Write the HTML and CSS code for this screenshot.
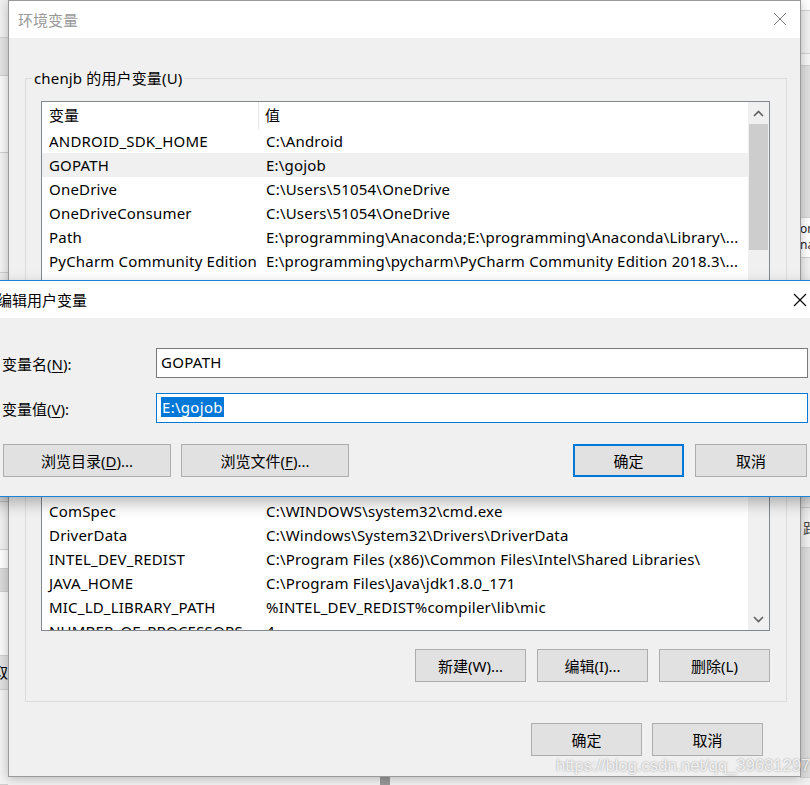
FILE: index.html
```html
<!DOCTYPE html>
<html lang="zh">
<head>
<meta charset="utf-8">
<title>环境变量</title>
<link rel="stylesheet" href="styles.css">
</head>
<body>
<div class="desk">
  <div class="bg-left">
    <div class="s s1"></div><div class="s s2"></div><div class="s s3"></div><div class="s s4"></div>
    <div class="s s5"></div><div class="s s6"></div><div class="s s7"></div><div class="s s8"></div>
    <div class="s s9"></div><div class="s s10">取消</div><div class="s s11"></div>
  </div>
  <div class="bg-right">
    <div class="r r1"></div><div class="r r2"></div><div class="r r3"></div><div class="r r4"></div>
    <div class="r r5"><span>oro</span><span>nar</span></div><div class="r r6"></div>
    <div class="r r7">距</div><div class="r r8"></div>
  </div>
  <div class="bg-bottom-mark"></div>

  <div class="win main">
    <div class="titlebar">
      <span class="title inactive">环境变量</span>
      <svg class="close" width="14" height="14" viewBox="0 0 14 14"><path d="M1 1L13 13M13 1L1 13" stroke="#7a7a7a" stroke-width="1" fill="none"/></svg>
    </div>
    <div class="body">
      <fieldset class="group">
        <legend>chenjb 的用户变量(U)</legend>
        <div class="list">
          <div class="list-main">
            <div class="lrow head"><span class="c1">变量</span><span class="c2">值</span></div>
            <div class="lrow"><span class="c1">ANDROID_SDK_HOME</span><span class="c2">C:\Android</span></div>
            <div class="lrow sel"><span class="c1">GOPATH</span><span class="c2">E:\gojob</span></div>
            <div class="lrow"><span class="c1">OneDrive</span><span class="c2">C:\Users\51054\OneDrive</span></div>
            <div class="lrow"><span class="c1">OneDriveConsumer</span><span class="c2">C:\Users\51054\OneDrive</span></div>
            <div class="lrow"><span class="c1">Path</span><span class="c2">E:\programming\Anaconda;E:\programming\Anaconda\Library\...</span></div>
            <div class="lrow"><span class="c1">PyCharm Community Edition</span><span class="c2">E:\programming\pycharm\PyCharm Community Edition 2018.3\...</span></div>
            <div class="hidden-gap"></div>
            <div class="lrow"><span class="c1">ComSpec</span><span class="c2">C:\WINDOWS\system32\cmd.exe</span></div>
            <div class="lrow"><span class="c1">DriverData</span><span class="c2">C:\Windows\System32\Drivers\DriverData</span></div>
            <div class="lrow"><span class="c1">INTEL_DEV_REDIST</span><span class="c2">C:\Program Files (x86)\Common Files\Intel\Shared Libraries\</span></div>
            <div class="lrow"><span class="c1">JAVA_HOME</span><span class="c2">C:\Program Files\Java\jdk1.8.0_171</span></div>
            <div class="lrow"><span class="c1">MIC_LD_LIBRARY_PATH</span><span class="c2">%INTEL_DEV_REDIST%compiler\lib\mic</span></div>
            <div class="lrow"><span class="c1">NUMBER_OF_PROCESSORS</span><span class="c2">4</span></div>
          </div>
          <div class="vscroll">
            <div class="arrow"><svg width="11" height="7" viewBox="0 0 11 7"><path d="M1 6L5.5 1.5L10 6" stroke="#606060" stroke-width="1.6" fill="none"/></svg></div>
            <div class="thumb"></div>
            <div class="track"></div>
            <div class="arrow"><svg width="11" height="7" viewBox="0 0 11 7"><path d="M1 1L5.5 5.5L10 1" stroke="#606060" stroke-width="1.6" fill="none"/></svg></div>
          </div>
        </div>
        <div class="btnrow">
          <button class="btn">新建(W)...</button>
          <button class="btn">编辑(I)...</button>
          <button class="btn">删除(L)</button>
        </div>
      </fieldset>
      <div class="footer">
        <button class="btn">确定</button>
        <button class="btn">取消</button>
      </div>
    </div>
  </div>

  <div class="win edit">
    <div class="titlebar">
      <span class="title">编辑用户变量</span>
      <svg class="close" width="14" height="14" viewBox="0 0 14 14"><path d="M1 1L13 13M13 1L1 13" stroke="#000" stroke-width="1.1" fill="none"/></svg>
    </div>
    <div class="ebody">
      <div class="frow">
        <label class="flabel">变量名(<u>N</u>):</label>
        <div class="input">GOPATH</div>
      </div>
      <div class="frow">
        <label class="flabel">变量值(<u>V</u>):</label>
        <div class="input focus"><span class="selected">E:\gojob</span></div>
      </div>
      <div class="ebtns">
        <button class="btn wide">浏览目录(<u>D</u>)...</button>
        <button class="btn wide">浏览文件(<u>F</u>)...</button>
        <span class="spacer"></span>
        <button class="btn default">确定</button>
        <button class="btn last">取消</button>
      </div>
    </div>
  </div>

  <div class="watermark">https://blog.csdn.net/qq_39681297</div>
</div>
</body>
</html>
```
FILE: styles.css
```css
* { box-sizing: border-box; }
html, body { margin: 0; padding: 0; }
body {
  width: 810px;
  height: 785px;
  overflow: hidden;
  font-family: "Noto Sans", "Noto Sans CJK SC", sans-serif;
  font-size: 15px;
  color: #000;
  background: #f4f4f4;
}
.desk { position: relative; width: 810px; height: 785px; overflow: hidden; }

/* background windows */
.bg-left { position: absolute; left: 0; top: 0; width: 8px; height: 785px; display: flex; flex-direction: column; overflow: hidden; }
.bg-left .s { flex: none; border-bottom: 1px solid #cfcfcf; }
.s1 { height: 38px; background: #f0f0f0; }
.s2 { height: 38px; background: #e4e4e4; }
.s3 { height: 77px; background: #f9f9f9; }
.s4 { height: 120px; background: #f3f3f3; }
.s5 { height: 229px; background: #f0f0f0; }
.s6 { height: 48px; background: #f0f0f0; }
.s7 { height: 19px; background: #fff; }
.s8 { height: 23px; background: #dadada; }
.s9 { height: 64px; background: #fafafa; }
.s10 { height: 34px; background: #e1e1e1; font-size: 15px; line-height: 32px; margin-left: -7px; white-space: nowrap; }
.s11 { height: 95px; background: #f3f3f3; border-bottom: none; }

.bg-right { position: absolute; left: 800px; top: 0; width: 10px; height: 785px; display: flex; flex-direction: column; overflow: hidden; background: #f0f0f0; }
.bg-right .r { flex: none; border-bottom: 1px solid #d0d0d0; }
.r1 { height: 11px; background: #fff; }
.r2 { height: 43px; background: #f0f0f0; }
.r3 { height: 12px; background: #f6f6f6; }
.r4 { height: 152px; background: #dedede; }
.r5 { height: 40px; background: #fff; display: flex; flex-direction: column; font-size: 12px; line-height: 16px; padding-top: 3px; color: #222; }
.r6 { height: 250px; background: #f0f0f0; }
.r7 { height: 40px; background: #f0f0f0; font-size: 15px; line-height: 40px; padding-left: 3px; color: #444; }
.r8 { height: 230px; background: #dcdcdc; border-bottom: none; }

.bg-bottom-mark { position: absolute; left: 380px; top: 776px; width: 10px; height: 9px; background: #9a9a9a; }

/* windows */
.win { position: absolute; display: flex; flex-direction: column; background: #f0f0f0; }
.titlebar {
  flex: none;
  display: flex;
  align-items: center;
  justify-content: space-between;
  background: #fff;
  height: 37px;
}
.title { font-size: 15px; white-space: nowrap; }
.title.inactive { color: #999; }

.main {
  left: 8px; top: 0; width: 793px; height: 777px;
  border: 1px solid #9a9a9a;
  box-shadow: 0 2px 10px rgba(0,0,0,0.25);
}
.main .titlebar { padding: 0 13px 0 9px; }
.main .close { margin-top: -1px; }

.body { flex: 1; display: flex; flex-direction: column; }

.group {
  margin: 30px 13px 0 16px;
  border: 1px solid #dcdcdc;
  padding: 0 16px 19px 15px;
  min-width: 0;
}
.group legend {
  margin-left: -9px;
  padding: 0 2px;
  font-size: 15px;
  line-height: 20px;
  white-space: nowrap;
  letter-spacing: 0.15px;
}
.list {
  margin-top: 13px;
  height: 530px;
  border: 1px solid #828790;
  background: #fff;
  display: flex;
  overflow: hidden;
}
.list-main { flex: 1; min-width: 0; overflow: hidden; }
.lrow { display: flex; height: 24px; line-height: 24px; white-space: nowrap; letter-spacing: 0.2px; }
.lrow.head { height: 27px; line-height: 27px; letter-spacing: 0; }
.lrow.sel { background: #f0f0f0; }
.c1 { flex: none; width: 217px; padding-left: 7px; overflow: hidden; }
.c2 { flex: 1; min-width: 0; padding-left: 7px; overflow: hidden; }
.head .c1 { border-right: 1px solid #e5e5e5; }
.head .c2 { padding-left: 6px; }
.hidden-gap { height: 226px; }

.vscroll { flex: none; width: 21px; background: #f0f0f0; display: flex; flex-direction: column; }
.arrow { flex: none; height: 22px; display: flex; align-items: center; justify-content: center; }
.thumb { flex: none; height: 126px; margin: 0 1px; background: #cdcdcd; }
.track { flex: 1; }

.btn {
  font-family: "Noto Sans", "Noto Sans CJK SC", sans-serif;
  font-size: 15px;
  color: #000;
  background: #e1e1e1;
  border: 1px solid #adadad;
  height: 33px;
  width: 111px;
  padding: 0;
  margin: 0;
  white-space: nowrap;
}
.btn u { text-decoration-thickness: 1px; text-underline-offset: 2px; }
.btnrow { display: flex; justify-content: flex-end; gap: 11px; margin-top: 18px; }
.footer { display: flex; justify-content: flex-end; gap: 10px; margin-top: 21px; padding-right: 37px; }

/* edit dialog */
.edit {
  left: -20px; top: 280px; width: 842px; height: 217px;
  border: 1px solid #1883d7;
  box-shadow: 0 6px 14px rgba(0,0,0,0.28);
}
.edit .titlebar { padding: 0 14px 0 16px; }
.edit .close { margin-top: 1px; }
.ebody { flex: 1; padding: 30px 13px 0 21px; display: flex; flex-direction: column; }
.frow { display: flex; align-items: center; height: 30px; margin-bottom: 15px; }
.frow + .frow { margin-bottom: 0; }
.flabel { flex: none; width: 154px; font-size: 15px; }
.flabel u { text-underline-offset: 2px; }
.input {
  flex: 1;
  height: 30px;
  background: #fff;
  border: 1px solid #7a7a7a;
  padding-left: 4px;
  line-height: 27px;
  white-space: nowrap;
  letter-spacing: 0.3px;
}
.input.focus { border-color: #0078d7; }
.selected { background: #0078d7; color: #fff; padding: 0 1px; }
.ebtns { display: flex; align-items: center; margin-top: 21px; padding-left: 1px; padding-right: 1px; }
.btn.wide { width: 168px; margin-right: 10px; }
.spacer { flex: 1; }
.btn.default { width: 111px; border: 2px solid #0078d7; margin-right: 11px; }
.btn.last { width: 112px; }

.watermark {
  position: absolute;
  left: 556px;
  top: 756px;
  font-family: "Liberation Sans", Arial, sans-serif;
  font-size: 17px;
  color: rgba(255,255,255,0.8);
  text-shadow: 0 0 2px rgba(0,0,0,0.4);
  white-space: nowrap;
  letter-spacing: -0.2px;
}
```
